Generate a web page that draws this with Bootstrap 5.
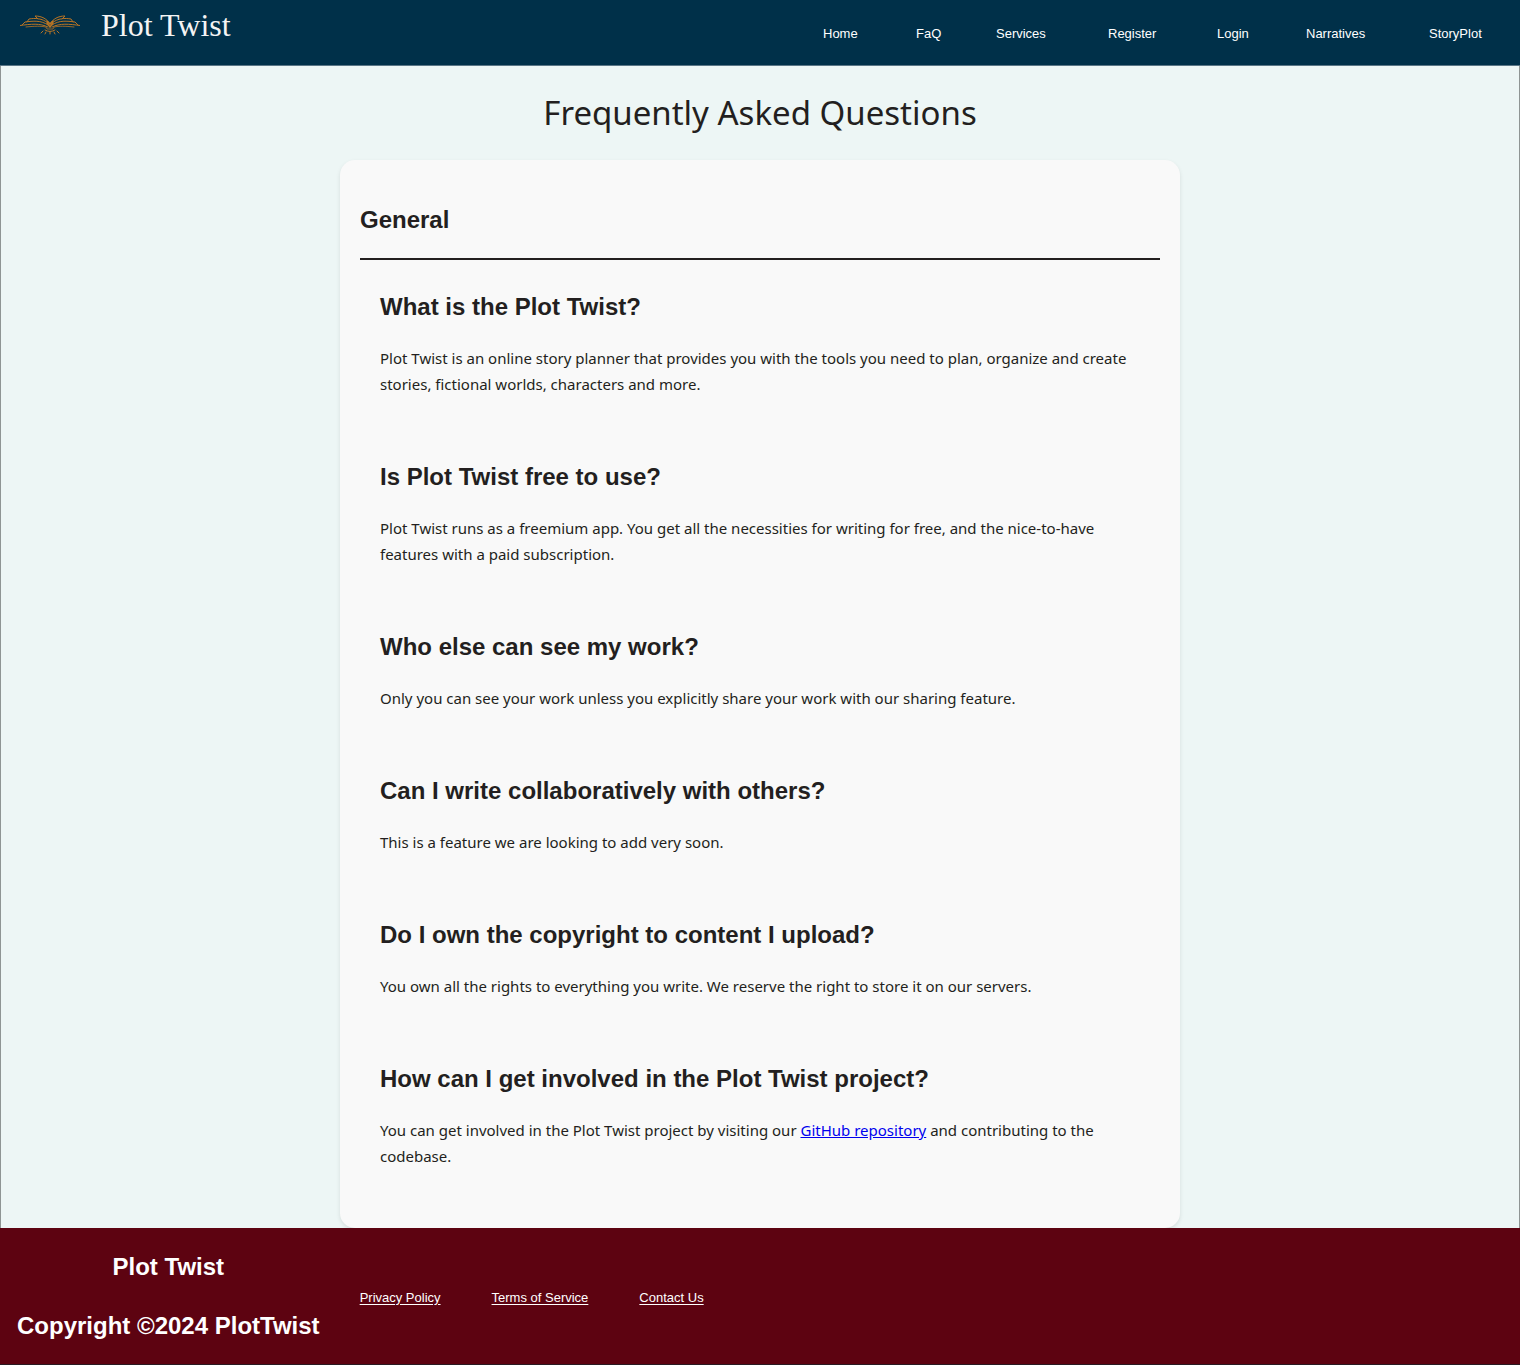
<!DOCTYPE html>
<html lang="en">
<head>
<meta charset="utf-8">
<meta name="viewport" content="width=device-width, initial-scale=1">
<title>Plot Twist - FAQ</title>
<link href="https://cdn.jsdelivr.net/npm/bootstrap@5.3.0/dist/css/bootstrap.min.css" rel="stylesheet">
<style>
body { background: #edf6f5; color: #231f20; font-family: "Segoe UI", "Noto Sans", "Open Sans", sans-serif; font-size: 15px; line-height: 26px; }
.page-frame { border: solid #8f9594; border-width: 0 1px; }
.site-nav { background: #003049; height: 66px; border-bottom: 1px solid #5a7686; margin: 0 -1px; padding: 0 36px 0 20px; }
.site-brand { font-family: "Liberation Serif", serif; font-size: 32px; line-height: 34px; color: #f4f4f4; padding-left: 21px; }
.site-links { display: grid; grid-template-columns: 93px 80px 112px 109px 89px 123px 55px; padding-top: 2px; }
.narrow-link { font-family: "Arial Narrow", "Liberation Sans Narrow", "Liberation Sans", sans-serif; font-size: 13px; line-height: 20px; color: #fff; }
.page-title { font-size: 33px; line-height: 40px; font-weight: 400; padding: 27px 0; }
.faq-panel { max-width: 840px; padding: 46px 20px 59px; background: #f9f9f9; border-radius: 15px; box-shadow: 0 2px 4px rgba(0,0,0,.1); }
.bold-title { font-family: "Liberation Sans", sans-serif; font-size: 24px; line-height: 28px; font-weight: 700; margin: 0; }
.faq-section { padding-bottom: 24px; border-bottom: 2px solid #231f20; }
.faq-list { padding: 33px 20px 0; display: flex; flex-direction: column; gap: 66px; }
.faq-list p { margin: 24px 0 0; }
.faq-list a { color: #00e; }
.site-footer { background: #5d0311; color: #fff; margin: 0 -1px; padding: 25px 17px 24px; gap: 40px; border-bottom: 1px solid #2b1a22; }
.footer-name { gap: 31px; }
.footer-links { gap: 51px; padding-top: 2px; }
.footer-links a { text-underline-offset: 2px; }
</style>
</head>
<body>
<div class="page-frame">
  <header class="site-nav d-flex justify-content-between">
    <a class="d-flex align-items-start text-decoration-none pt-2" href="#">
      <svg class="mt-1" width="60" height="28" viewBox="0 0 60 28" fill="none" stroke="#b87424" stroke-linecap="round" stroke-width="1" aria-hidden="true">
        <path d="M30 12C27 7 22 4 15 4L18 7M30 12C33 7 38 4 45 4L42 7"/>
        <path d="M28 11C22 6 15 6 9 7L7 10M32 11C38 6 45 6 51 7L53 10"/>
        <path d="M28 13C21 8 13 9 5 10L2 13M32 13C39 8 47 9 55 10L58 13"/>
        <path d="M0 13.500C11 12 20 11 28 15M60 13.500C49 12 40 11 32 15"/>
        <path d="M6 15C15 14 21 14 26 15L27 17H33L34 15C39 14 45 14 54 15" stroke-width=".8"/>
        <path d="M27 9L30 12L33 9M27 11L30 15L33 11" stroke-width="1.500"/>
        <path d="M25 18Q30 21 35 18M23 19L21 21M26 20L25 22M30 20V22M34 20L35 22M37 19L39 21"/>
      </svg>
      <span class="site-brand">Plot Twist</span>
    </a>
    <nav class="site-links align-items-center" aria-label="Main">
      <a class="narrow-link text-decoration-none" href="#">Home</a>
      <a class="narrow-link text-decoration-none" href="#">FaQ</a>
      <a class="narrow-link text-decoration-none" href="#">Services</a>
      <a class="narrow-link text-decoration-none" href="#">Register</a>
      <a class="narrow-link text-decoration-none" href="#">Login</a>
      <a class="narrow-link text-decoration-none" href="#">Narratives</a>
      <a class="narrow-link text-decoration-none" href="#">StoryPlot</a>
    </nav>
  </header>
  <main>
    <h1 class="page-title text-center m-0">Frequently Asked Questions</h1>
    <section class="faq-panel mx-auto">
      <h2 class="bold-title faq-section">General</h2>
      <div class="faq-list">
        <article><h3 class="bold-title">What is the Plot Twist?</h3><p>Plot Twist is an online story planner that provides you with the tools you need to plan, organize and create stories, fictional worlds, characters and more.</p></article>
        <article><h3 class="bold-title">Is Plot Twist free to use?</h3><p>Plot Twist runs as a freemium app. You get all the necessities for writing for free, and the nice-to-have features with a paid subscription.</p></article>
        <article><h3 class="bold-title">Who else can see my work?</h3><p>Only you can see your work unless you explicitly share your work with our sharing feature.</p></article>
        <article><h3 class="bold-title">Can I write collaboratively with others?</h3><p>This is a feature we are looking to add very soon.</p></article>
        <article><h3 class="bold-title">Do I own the copyright to content I upload?</h3><p>You own all the rights to everything you write. We reserve the right to store it on our servers.</p></article>
        <article><h3 class="bold-title">How can I get involved in the Plot Twist project?</h3><p>You can get involved in the Plot Twist project by visiting our <a href="#">GitHub repository</a> and contributing to the codebase.</p></article>
      </div>
    </section>
  </main>
  <footer class="site-footer d-flex align-items-center">
    <div class="footer-name d-flex flex-column text-center">
      <h2 class="bold-title">Plot Twist</h2>
      <h2 class="bold-title">Copyright ©2024 PlotTwist</h2>
    </div>
    <nav class="footer-links d-flex" aria-label="Footer">
      <a class="narrow-link" href="#">Privacy Policy</a>
      <a class="narrow-link" href="#">Terms of Service</a>
      <a class="narrow-link" href="#">Contact Us</a>
    </nav>
  </footer>
</div>
<script src="https://cdn.jsdelivr.net/npm/bootstrap@5.3.0/dist/js/bootstrap.bundle.min.js"></script>
</body>
</html>
